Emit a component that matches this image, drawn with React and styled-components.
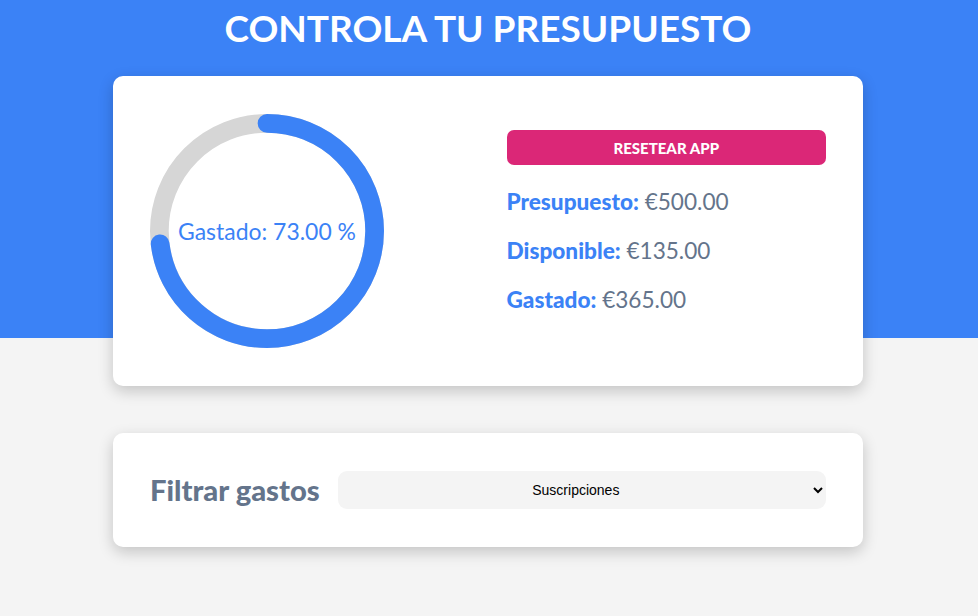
import React from "react";
import styled, { createGlobalStyle } from "styled-components";

const GlobalStyle = createGlobalStyle`
  *, *::before, *::after { box-sizing: border-box; }
  html, body { margin: 0; padding: 0; }
  body {
    font-family: Lato, "Noto Sans", sans-serif;
    background: #f4f4f4;
  }
`;

const Page = styled.div`
  min-height: 616px;
  padding: 4px 2px 0 0;
  background: linear-gradient(#3b82f6 0, #3b82f6 338px, #f4f4f4 338px);
`;

const Title = styled.h1`
  margin: 0 0 25px;
  font-size: 37px;
  line-height: 47px;
  font-weight: 700;
  text-align: center;
  color: #fff;
`;

const Container = styled.div`
  width: 750px;
  margin: 0 auto;
  display: flex;
  flex-direction: column;
  gap: 47px;
`;

const Card = styled.div`
  background: #fff;
  border-radius: 10px;
  box-shadow: 0 5px 15px 0 rgba(0, 0, 0, 0.2);
  padding: 38px 37px;
`;

const TwoColumns = styled.div`
  display: grid;
  grid-template-columns: repeat(2, 1fr);
  gap: 37px;
  align-items: center;
`;

const Chart = styled.div`
  width: 234px;
  height: 234px;
`;

const Info = styled.div`
  display: flex;
  flex-direction: column;
  gap: 20px;
  padding-bottom: 18px;
`;

const ResetButton = styled.button`
  width: 100%;
  height: 35px;
  margin-bottom: 2px;
  border: none;
  border-radius: 7px;
  background: #db2777;
  color: #fff;
  font-family: Lato, sans-serif;
  font-weight: 900;
  font-size: 15px;
  text-transform: uppercase;
  cursor: pointer;
`;

const Stat = styled.p`
  margin: 0;
  font-size: 22.6px;
  line-height: 29px;
  color: #64748b;

  span {
    font-weight: 900;
    color: #3b82f6;
  }
`;

const Field = styled.div`
  display: flex;
  align-items: center;
  gap: 18px;
`;

const Label = styled.label`
  font-size: 29.2px;
  line-height: 38px;
  font-weight: 900;
  color: #64748b;
`;

const Select = styled.select`
  flex: 1;
  height: 38px;
  padding: 0 8px;
  border: none;
  border-radius: 9px;
  background: #f4f4f4;
  text-align: center;
  font-family: "Liberation Sans", Arial, sans-serif;
  font-size: 14px;
  color: #000;
`;

const Progress = ({ value }) => {
  const r = 46;
  const c = 2 * Math.PI * r;
  return (
    <svg viewBox="0 0 100 100" width="100%" height="100%">
      <circle cx="50" cy="50" r={r} fill="none" stroke="#d6d6d6" strokeWidth="8" />
      <circle
        cx="50"
        cy="50"
        r={r}
        fill="none"
        stroke="#3b82f6"
        strokeWidth="8"
        strokeLinecap="round"
        strokeDasharray={c}
        strokeDashoffset={c * (1 - value / 100)}
        transform="rotate(-90 50 50)"
      />
      <text
        x="50"
        y="50"
        fill="#3b82f6"
        fontSize="9.8"
        fontFamily="Lato, sans-serif"
        textAnchor="middle"
        dominantBaseline="central"
      >
        Gastado: {value.toFixed(2)} %
      </text>
    </svg>
  );
};

const App = () => {
  return (
    <Page>
      <GlobalStyle />
      <Title>CONTROLA TU PRESUPUESTO</Title>
      <Container>
        <Card>
          <TwoColumns>
            <Chart>
              <Progress value={73} />
            </Chart>
            <Info>
              <ResetButton>Resetear App</ResetButton>
              <Stat>
                <span>Presupuesto:</span> €500.00
              </Stat>
              <Stat>
                <span>Disponible:</span> €135.00
              </Stat>
              <Stat>
                <span>Gastado:</span> €365.00
              </Stat>
            </Info>
          </TwoColumns>
        </Card>
        <Card>
          <Field>
            <Label htmlFor="filtro">Filtrar gastos</Label>
            <Select id="filtro" defaultValue="suscripciones">
              <option value="">-- Todas las categorías --</option>
              <option value="ahorro">Ahorro</option>
              <option value="comida">Comida</option>
              <option value="casa">Casa</option>
              <option value="gastos">Gastos varios</option>
              <option value="ocio">Ocio</option>
              <option value="salud">Salud</option>
              <option value="suscripciones">Suscripciones</option>
            </Select>
          </Field>
        </Card>
      </Container>
    </Page>
  );
};

export default App;
